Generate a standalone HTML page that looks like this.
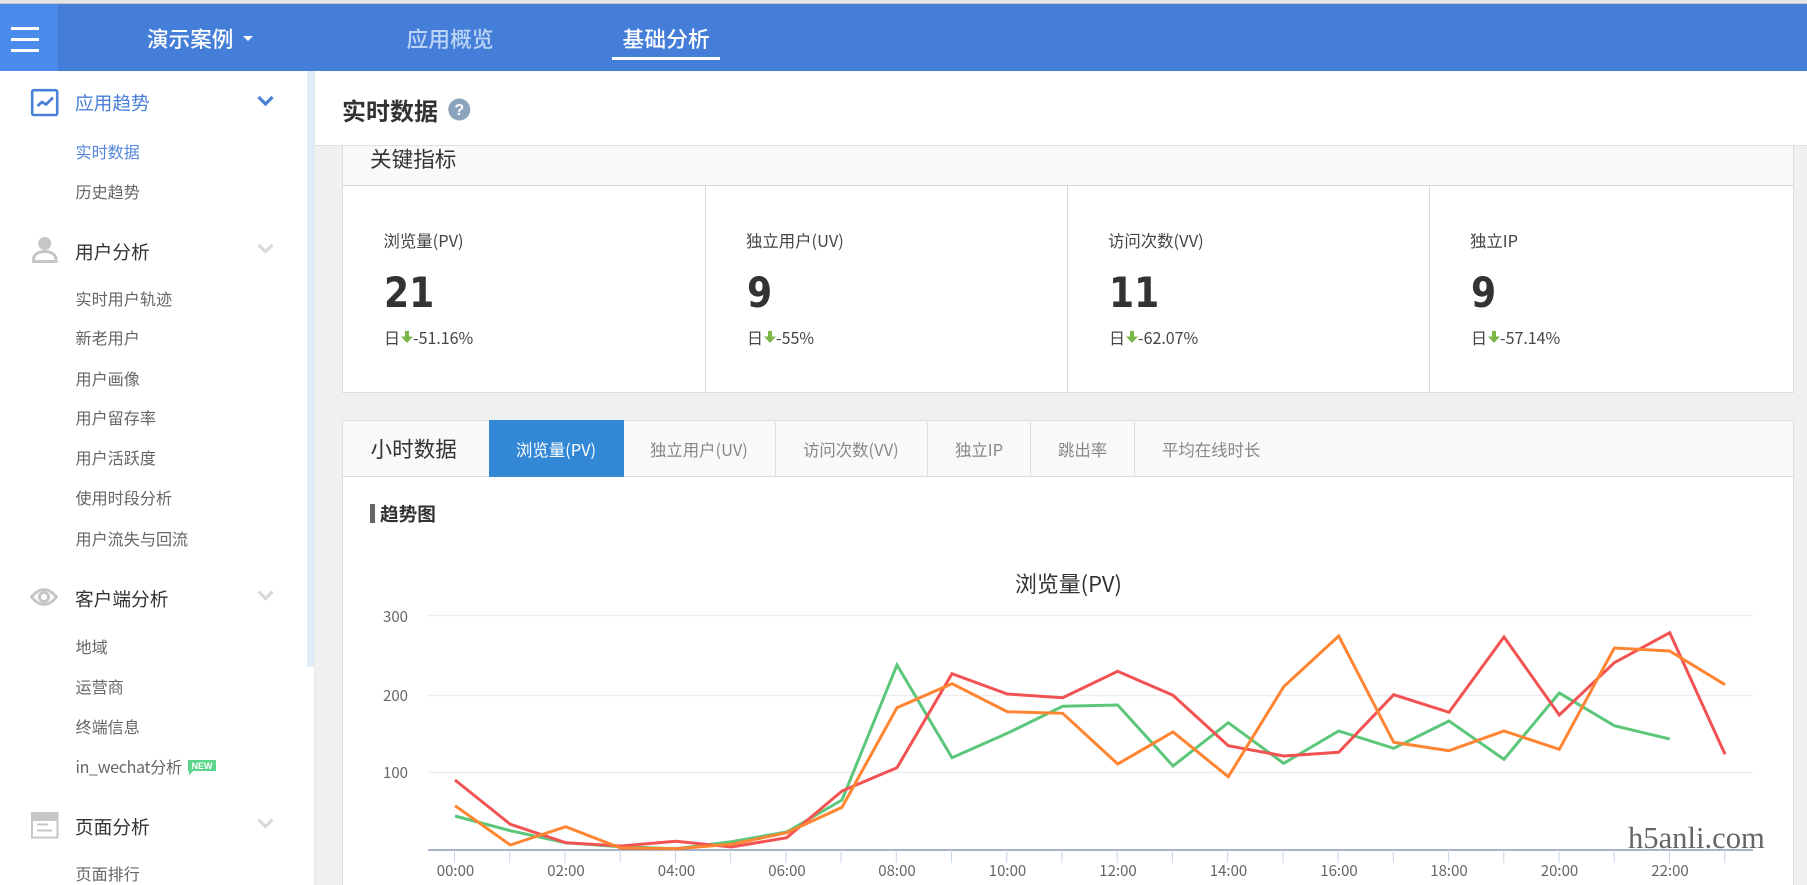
<!DOCTYPE html>
<html lang="zh"><head><meta charset="utf-8"><title>实时数据</title>
<style>
*{margin:0;padding:0;box-sizing:border-box}
html,body{width:1807px;height:885px;overflow:hidden;background:#f0f0f0}
body{position:relative;font-family:"Noto Sans CJK SC","Liberation Sans",sans-serif;color:#333}
.a{position:absolute}
.t{position:absolute;white-space:nowrap;line-height:30px;height:30px}
.h{font-weight:500}
.m{font-size:18.7px;left:75px}
.s{font-size:16.1px;left:75.5px;color:#666}
.lb{font-size:16.4px;color:#444}
.num{font-family:"DejaVu Sans",sans-serif;font-weight:700;font-size:42px;line-height:50px;height:50px;transform:scaleX(.86);transform-origin:left center;color:#333}
.dl{font-size:16px;color:#444;display:flex;align-items:center}
.dl svg{margin:0 0 0 1px}
.tb{font-size:16.4px;color:#888}
.tk{font-size:15px;color:#666;transform:translateX(-50%)}
.yl{font-size:15px;color:#666;width:50px;text-align:right;left:358px}
.dv{position:absolute;background:#ddd;width:1px}
</style></head><body>

<!-- top bar -->
<div class="a" style="left:0;top:0;width:1807px;height:3px;background:#e4e4e4"></div>
<div class="a" style="left:0;top:3px;width:1807px;height:1px;background:#c4c4c4"></div>
<div class="a" style="left:0;top:4px;width:1807px;height:67px;background:#447ed9"></div>
<div class="a" style="left:0;top:4px;width:58px;height:67px;background:#4a8bec"></div>
<div class="a" style="left:11px;top:27px;width:28px;height:3px;background:#fff"></div>
<div class="a" style="left:11px;top:38px;width:28px;height:2.5px;background:#fff"></div>
<div class="a" style="left:11px;top:49px;width:28px;height:2.5px;background:#fff"></div>
<div class="t h" style="left:147px;top:24px;font-size:21.6px;color:#fff">演示案例</div>
<svg class="a" style="left:242px;top:35px" width="12" height="7"><path d="M1 1H11L6 6Z" fill="#fff"/></svg>
<div class="t h" style="left:406.5px;top:24px;font-size:21.8px;color:#bcd5f7">应用概览</div>
<div class="t h" style="left:622.5px;top:24px;font-size:21.8px;color:#fff">基础分析</div>
<div class="a" style="left:612px;top:57px;width:108px;height:3px;background:#fff"></div>

<!-- sidebar -->
<div class="a" style="left:0;top:71px;width:314px;height:814px;background:#fff"></div>
<div class="a" style="left:307px;top:71px;width:7px;height:596px;background:#e0ecf8"></div>
<div class="a" style="left:314px;top:71px;width:1px;height:814px;background:#e8e8e8"></div>

<svg class="a" style="left:0;top:71px" width="307" height="814" viewBox="0 71 307 814" fill="none">
 <rect x="32.2" y="90.2" width="25" height="24.8" rx="1.5" stroke="#4a80d8" stroke-width="2.6"/>
 <path d="M37.5 106L42 102L46 104.5L53 97.5" stroke="#4a80d8" stroke-width="2.8"/>
 <path d="M258.5 97L265.5 104L272.5 97" stroke="#4a80d8" stroke-width="3.2"/>

 <circle cx="44.7" cy="243.5" r="6.5" fill="#c6c6c6"/>
 <path d="M33.5 261.5V259.5C33.5 254.5 38.5 251.5 44.7 251.5S56 254.5 56 259.5V261.5Z" stroke="#c6c6c6" stroke-width="3"/>
 <path d="M258.5 245L265.5 251.5L272.5 245" stroke="#d8d8d8" stroke-width="3.2"/>

 <path d="M31.5 597Q44 582 56.5 597Q44 612 31.5 597Z" stroke="#c6c6c6" stroke-width="2.8"/>
 <circle cx="44" cy="597" r="4.5" stroke="#c6c6c6" stroke-width="3"/>
 <path d="M258.5 591.5L265.5 598.5L272.5 591.5" stroke="#d8d8d8" stroke-width="3.2"/>

 <rect x="32" y="813" width="25.5" height="24.5" stroke="#c6c6c6" stroke-width="2"/>
 <rect x="31" y="812" width="27.5" height="9" fill="#c6c6c6"/>
 <path d="M37 824.5H48M37 830.5H52" stroke="#c6c6c6" stroke-width="2"/>
 <path d="M258.5 819.5L265.5 826.5L272.5 819.5" stroke="#d8d8d8" stroke-width="3.2"/>
</svg>

<div class="t m" style="top:88px;color:#4a80d8">应用趋势</div>
<div class="t s" style="top:136px;color:#5585dc">实时数据</div>
<div class="t s" style="top:176px">历史趋势</div>
<div class="t m" style="top:237px">用户分析</div>
<div class="t s" style="top:283px">实时用户轨迹</div>
<div class="t s" style="top:322px">新老用户</div>
<div class="t s" style="top:362.5px">用户画像</div>
<div class="t s" style="top:402px">用户留存率</div>
<div class="t s" style="top:442px">用户活跃度</div>
<div class="t s" style="top:482px">使用时段分析</div>
<div class="t s" style="top:523px">用户流失与回流</div>
<div class="t m" style="top:584px">客户端分析</div>
<div class="t s" style="top:631px">地域</div>
<div class="t s" style="top:670.5px">运营商</div>
<div class="t s" style="top:711px">终端信息</div>
<div class="t s" style="top:751px;letter-spacing:-.35px">in_wechat分析</div>
<svg class="a" style="left:188px;top:760px" width="28" height="16"><path d="M0 0H28V11H5L1 15.5V11H0Z" fill="#5cd68a"/><text x="14" y="9" text-anchor="middle" font-family="Liberation Sans" font-weight="700" font-size="9" fill="#fff">NEW</text></svg>
<div class="t m" style="top:812px">页面分析</div>
<div class="t s" style="top:858px">页面排行</div>

<!-- title panel -->
<div class="a" style="left:315px;top:71px;width:1492px;height:75px;background:#fff;border-bottom:1px solid #e0e0e0;z-index:3"></div>
<div class="t" style="left:342px;top:95px;font-size:24px;font-weight:700;color:#333;z-index:4">实时数据</div>
<svg class="a" style="left:448px;top:98px;z-index:4" width="23" height="23"><circle cx="11.3" cy="11.5" r="11" fill="#8aa4bd"/><text x="11.3" y="17" text-anchor="middle" font-family="Liberation Sans" font-weight="700" font-size="16" fill="#fff">?</text></svg>

<!-- key metrics -->
<div class="a" style="left:342px;top:146px;width:1452px;height:247px;background:#fff;border:1px solid #ddd;border-top:0"></div>
<div class="a" style="left:343px;top:146px;width:1450px;height:40px;background:#f9f9f9;border-bottom:1px solid #d8d8d8"></div>
<div class="t" style="left:370px;top:143.5px;font-size:21.6px;color:#333">关键指标</div>
<div class="dv" style="left:705px;top:186px;height:206px;background:#d8d8d8"></div>
<div class="dv" style="left:1067px;top:186px;height:206px;background:#d8d8d8"></div>
<div class="dv" style="left:1429px;top:186px;height:206px;background:#d8d8d8"></div>

<div class="t lb" style="left:383.5px;top:225px">浏览量(PV)</div>
<div class="t num" style="left:384px;top:268px">21</div>
<div class="t dl" style="left:384px;top:322px">日<svg width="12" height="12"><path d="M4 0H8V5.5H12L6 12L0 5.5H4Z" fill="#7ab648"/></svg>-51.16%</div>

<div class="t lb" style="left:746px;top:225px">独立用户(UV)</div>
<div class="t num" style="left:747px;top:268px">9</div>
<div class="t dl" style="left:747px;top:322px">日<svg width="12" height="12"><path d="M4 0H8V5.5H12L6 12L0 5.5H4Z" fill="#7ab648"/></svg>-55%</div>

<div class="t lb" style="left:1108px;top:225px">访问次数(VV)</div>
<div class="t num" style="left:1109px;top:268px">11</div>
<div class="t dl" style="left:1109px;top:322px">日<svg width="12" height="12"><path d="M4 0H8V5.5H12L6 12L0 5.5H4Z" fill="#7ab648"/></svg>-62.07%</div>

<div class="t lb" style="left:1470px;top:225px">独立IP</div>
<div class="t num" style="left:1471px;top:268px">9</div>
<div class="t dl" style="left:1471px;top:322px">日<svg width="12" height="12"><path d="M4 0H8V5.5H12L6 12L0 5.5H4Z" fill="#7ab648"/></svg>-57.14%</div>

<!-- hourly panel -->
<div class="a" style="left:342px;top:420px;width:1452px;height:465px;background:#fff;border:1px solid #ddd;border-bottom:0"></div>
<div class="a" style="left:343px;top:421px;width:1450px;height:56px;background:#f9f9f9;border-bottom:1px solid #ddd"></div>
<div class="a" style="left:489px;top:420px;width:135px;height:57px;background:#3388d6"></div>
<div class="t" style="left:370.5px;top:434px;font-size:21.6px;color:#333">小时数据</div>
<div class="t tb" style="left:516px;top:434px;color:#fff">浏览量(PV)</div>
<div class="t tb" style="left:650px;top:434px">独立用户(UV)</div>
<div class="t tb" style="left:803px;top:434px">访问次数(VV)</div>
<div class="t tb" style="left:955px;top:434px">独立IP</div>
<div class="t tb" style="left:1058px;top:434px">跳出率</div>
<div class="t tb" style="left:1162px;top:434px">平均在线时长</div>
<div class="dv" style="left:775px;top:422px;height:54px"></div>
<div class="dv" style="left:927px;top:422px;height:54px"></div>
<div class="dv" style="left:1030px;top:422px;height:54px"></div>
<div class="dv" style="left:1134px;top:422px;height:54px"></div>

<div class="a" style="left:370px;top:504px;width:5px;height:19px;background:#666"></div>
<div class="t" style="left:380px;top:499px;font-size:18.6px;font-weight:700;color:#333">趋势图</div>
<div class="t" style="left:1015px;top:569px;font-size:21.9px;color:#333">浏览量(PV)</div>

<!-- chart -->
<svg class="a" style="left:0;top:0" width="1807" height="885" fill="none">
 <path d="M428 615.5H1753M428 695.5H1753M428 772.5H1753" stroke="#eee" stroke-width="1.4"/>
 <path d="M428 850H1753" stroke="#7485a6" stroke-width="1.2"/>
 <path d="M454.5 850V863M509.7 850V863M565 850V863M620.2 850V863M675.4 850V863M730.6 850V863M785.9 850V863M841.1 850V863M896.3 850V863M951.5 850V863M1006.8 850V863M1062 850V863M1117.2 850V863M1172.4 850V863M1227.7 850V863M1282.9 850V863M1338.1 850V863M1393.3 850V863M1448.6 850V863M1503.8 850V863M1559 850V863M1614.2 850V863M1669.5 850V863M1724.7 850V863" stroke="#c6d5e8" stroke-width="1"/>
 <polyline stroke="#5cc77a" stroke-width="3" points="455,816 510.3,830.7 565.7,842.7 620.7,846.7 676,848.7 731.3,841.7 786.7,832 842,800 897,665 952,757.7 1007.3,733.3 1062.7,706.3 1117.7,705 1173,766 1228.3,722.7 1283.7,763.3 1338.7,731 1393.7,748.3 1449,721 1504,759.3 1559.3,693 1614.3,725.7 1669.7,739"/>
 <polyline stroke="#f25252" stroke-width="3" points="455,780 510.3,824.3 565.7,842.7 620.7,846 676,841.3 731.3,847 786.7,837.7 842,791 897,767.7 952,673.7 1007.3,694 1062.7,697.7 1117.7,671.3 1173,695.3 1228.3,745.7 1283.7,756 1338.7,752.3 1393.7,694.7 1449,712.3 1504,637 1559.3,715 1614.3,662.7 1669.7,632.7 1725,754.3"/>
 <polyline stroke="#ff8533" stroke-width="3" points="455,805.7 510.3,845 565.7,826.7 620.7,848 676,848.7 731.3,844.3 786.7,832.7 842,807.3 897,707.7 952,683.7 1007.3,711.7 1062.7,713.3 1117.7,764 1173,732 1228.3,776.7 1283.7,686.7 1338.7,636 1393.7,742.3 1449,750.7 1504,731 1559.3,749.3 1614.3,648 1669.7,651 1725,684.7"/>
</svg>

<div class="t yl" style="top:602px">300</div>
<div class="t yl" style="top:681px">200</div>
<div class="t yl" style="top:758px">100</div>
<div class="t tk" style="left:455.5px;top:856px">00:00</div>
<div class="t tk" style="left:566px;top:856px">02:00</div>
<div class="t tk" style="left:676.5px;top:856px">04:00</div>
<div class="t tk" style="left:787px;top:856px">06:00</div>
<div class="t tk" style="left:897px;top:856px">08:00</div>
<div class="t tk" style="left:1007.5px;top:856px">10:00</div>
<div class="t tk" style="left:1118px;top:856px">12:00</div>
<div class="t tk" style="left:1228.5px;top:856px">14:00</div>
<div class="t tk" style="left:1339px;top:856px">16:00</div>
<div class="t tk" style="left:1449px;top:856px">18:00</div>
<div class="t tk" style="left:1559.5px;top:856px">20:00</div>
<div class="t tk" style="left:1670px;top:856px">22:00</div>

<div class="t" style="left:1628px;top:820px;line-height:36px;height:36px;font-family:'Liberation Serif',serif;font-size:30.6px;color:#666">h5anli.com</div>
</body></html>
